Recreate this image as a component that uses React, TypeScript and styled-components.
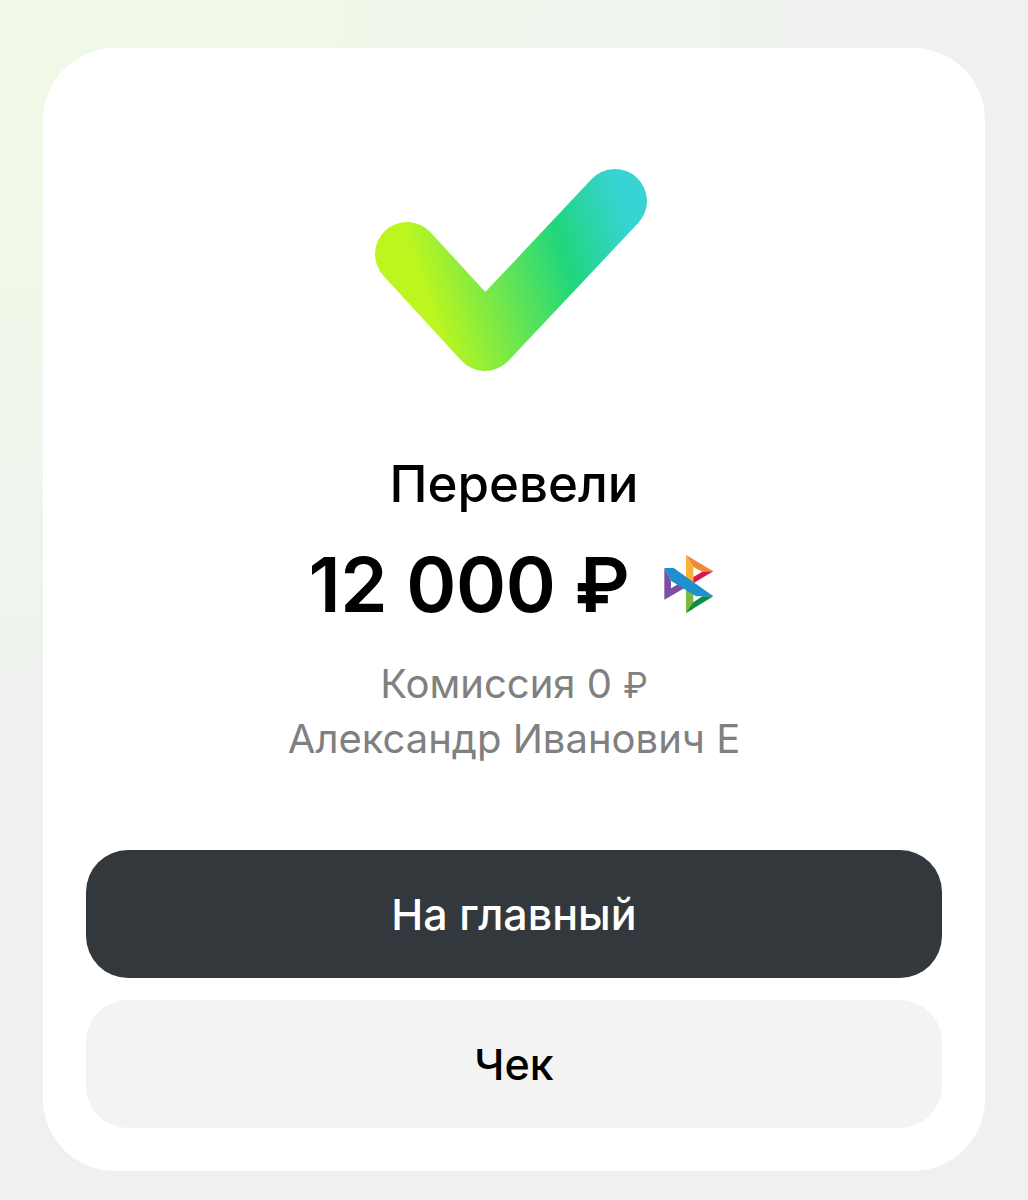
import styled, { createGlobalStyle } from 'styled-components'

const GlobalStyle = createGlobalStyle`
  html, body {
    margin: 0;
    padding: 0;
  }
`

const App = () => {
  return (
    <Page>
      <GlobalStyle />
      <Card>
        <CheckIcon viewBox="0 0 320 240">
          <defs>
            <linearGradient
              id="checkGradient"
              gradientUnits="userSpaceOnUse"
              x1="63"
              y1="120"
              x2="268"
              y2="55"
            >
              <stop offset="0" stopColor="#bdf61e" />
              <stop offset="0.68" stopColor="#1fd67e" />
              <stop offset="1" stopColor="#38d3d3" />
            </linearGradient>
          </defs>
          <path
            d="M53 104 L131 189 L261 51"
            fill="none"
            stroke="url(#checkGradient)"
            strokeWidth="64"
            strokeLinecap="round"
            strokeLinejoin="round"
          />
        </CheckIcon>
        <Title>Перевели</Title>
        <AmountRow>
          <Amount>12 000 ₽</Amount>
          <SbpLogo viewBox="0 0 270 270">
            <polygon points="70,87 70,182 132,146 112,135 90,148 90,125" fill="#7b4ea3" />
            <polygon points="135,48 135,128 157,140 157,84" fill="#f9b233" />
            <polygon points="135,48 217,97 184,98 157,84" fill="#ee8a3a" />
            <polygon points="217,97 157,133 157,114 184,98" fill="#d9184f" />
            <polygon points="135,150 135,222 157,210 157,162" fill="#7db83e" />
            <polygon points="135,222 217,172 184,172 157,190" fill="#0f8a43" />
            <polygon points="70,87 98,87 217,172 165,172 90,125" fill="#1f8fd0" />
          </SbpLogo>
        </AmountRow>
        <Details>
          <DetailLine>Комиссия 0 <Currency>₽</Currency></DetailLine>
          <DetailLine>Александр Иванович Е</DetailLine>
        </Details>
        <Actions>
          <ActionButton $primary type="button">На главный</ActionButton>
          <ActionButton type="button">Чек</ActionButton>
        </Actions>
      </Card>
    </Page>
  )
}

const Page = styled.div`
  box-sizing: border-box;
  width: 1028px;
  height: 1200px;
  padding: 48px 43px 29px;
  background: radial-gradient(
    ellipse 1000px 850px at 0 0,
    #f0f9e8 0%,
    #f0f8e9 32%,
    #eff5ee 62%,
    #f0f0f0 100%
  );
  font-family: Inter, 'Noto Sans', sans-serif;
`

const Card = styled.div`
  box-sizing: border-box;
  height: 1123px;
  padding: 102px 43px 43px;
  background: #ffffff;
  border-radius: 72px;
  display: flex;
  flex-direction: column;
  align-items: center;
`

const CheckIcon = styled.svg`
  width: 320px;
  height: 240px;
  flex: none;
`

const Title = styled.h1`
  margin: 62px 0 0;
  font-size: 51px;
  line-height: 64px;
  font-weight: 550;
  color: #000000;
`

const AmountRow = styled.div`
  margin-top: 23px;
  display: flex;
  align-items: center;
`

const Amount = styled.div`
  font-size: 76px;
  line-height: 90px;
  font-weight: 560;
  letter-spacing: -0.3px;
  color: #000000;
`

const SbpLogo = styled.svg`
  width: 90px;
  height: 90px;
  margin: 0 -11px 0 11px;
  flex: none;
`

const Details = styled.div`
  margin-top: 27px;
  text-align: center;
`

const DetailLine = styled.div`
  font-size: 40px;
  line-height: 55px;
  color: #808080;
`

const Currency = styled.span`
  font-size: 35px;
  line-height: 0;
`

const Actions = styled.div`
  margin-top: auto;
  align-self: stretch;
  display: flex;
  flex-direction: column;
  gap: 22px;
`

const ActionButton = styled.button<{ $primary?: boolean }>`
  height: 128px;
  border: none;
  border-radius: 42px;
  padding: 0;
  font-family: inherit;
  font-size: 43px;
  font-weight: 500;
  color: ${({ $primary }) => ($primary ? '#ffffff' : '#000000')};
  background: ${({ $primary }) => ($primary ? '#33383c' : '#f3f3f3')};
`

export default App
